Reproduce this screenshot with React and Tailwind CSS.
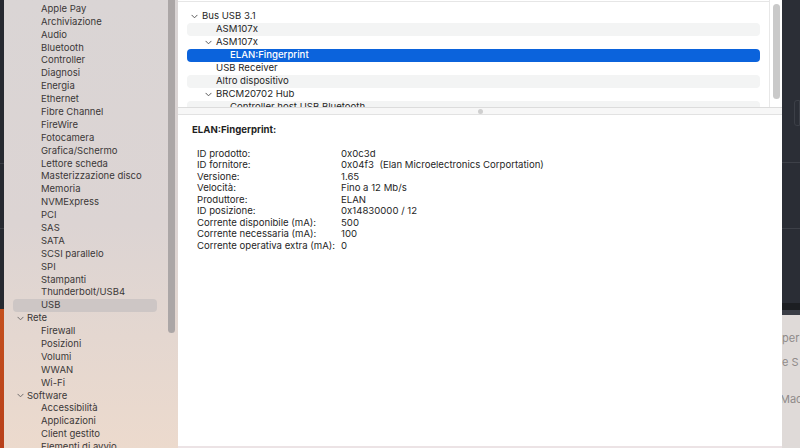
const sidebar = [
  { t: "Apple Pay" },
  { t: "Archiviazione" },
  { t: "Audio" },
  { t: "Bluetooth" },
  { t: "Controller" },
  { t: "Diagnosi" },
  { t: "Energia" },
  { t: "Ethernet" },
  { t: "Fibre Channel" },
  { t: "FireWire" },
  { t: "Fotocamera" },
  { t: "Grafica/Schermo" },
  { t: "Lettore scheda" },
  { t: "Masterizzazione disco" },
  { t: "Memoria" },
  { t: "NVMExpress" },
  { t: "PCI" },
  { t: "SAS" },
  { t: "SATA" },
  { t: "SCSI parallelo" },
  { t: "SPI" },
  { t: "Stampanti" },
  { t: "Thunderbolt/USB4" },
  { t: "USB", active: true },
  { t: "Rete", section: true },
  { t: "Firewall" },
  { t: "Posizioni" },
  { t: "Volumi" },
  { t: "WWAN" },
  { t: "Wi-Fi" },
  { t: "Software", section: true },
  { t: "Accessibilità" },
  { t: "Applicazioni" },
  { t: "Client gestito" },
  { t: "Elementi di avvio" },
];

const tree = [
  { t: "Bus USB 3.1", level: 0, open: true },
  { t: "ASM107x", level: 1 },
  { t: "ASM107x", level: 1, open: true },
  { t: "ELAN:Fingerprint", level: 2, selected: true },
  { t: "USB Receiver", level: 1 },
  { t: "Altro dispositivo", level: 1 },
  { t: "BRCM20702 Hub", level: 1, open: true },
  { t: "Controller host USB Bluetooth", level: 2 },
];

const details = [
  ["ID prodotto:", "0x0c3d"],
  ["ID fornitore:", "0x04f3  (Elan Microelectronics Corportation)"],
  ["Versione:", "1.65"],
  ["Velocità:", "Fino a 12 Mb/s"],
  ["Produttore:", "ELAN"],
  ["ID posizione:", "0x14830000 / 12"],
  ["Corrente disponibile (mA):", "500"],
  ["Corrente necessaria (mA):", "100"],
  ["Corrente operativa extra (mA):", "0"],
];

const font = { fontFamily: "Inter, 'Liberation Sans', sans-serif" };

function Chevron({ className }) {
  return (
    <svg viewBox="0 0 8 5" className={className} fill="none" stroke="currentColor" strokeWidth="1.1" strokeLinecap="round" strokeLinejoin="round">
      <path d="M1 1l3 3 3-3" />
    </svg>
  );
}

export default function App() {
  return (
    <div className="w-[800px] h-[448px] flex overflow-hidden bg-[#2a2d34]" style={font}>
      {/* desktop sliver on the left */}
      <div className="w-[4px] flex flex-col">
        <div className="h-[163px] bg-[#262930]" />
        <div className="h-[1px] bg-[#3a3d44]" />
        <div className="h-[64px] bg-[#262930]" />
        <div className="h-[1px] bg-[#3a3d44]" />
        <div className="h-[80px] bg-[#262930]" />
        <div className="flex-1 bg-gradient-to-b from-[#c4501e] to-[#b8401a]" />
      </div>

      {/* sidebar */}
      <div className="relative w-[174px] bg-gradient-to-b from-[#dad5d5] via-[#dcd4d3] to-[#ecdacd] pt-[2.5px] text-[9.5px] text-[#3b3838] overflow-hidden">
        {sidebar.map((s, i) =>
          s.section ? (
            <div key={i} className="h-[12.9px] flex items-center pl-[13px]">
              <Chevron className="w-[7px] h-[5px] text-[#6d6a6a] mr-[3px]" />
              <span>{s.t}</span>
            </div>
          ) : (
            <div
              key={i}
              className={`h-[12.9px] flex items-center ml-[9px] w-[144px] pl-[28px] whitespace-nowrap rounded-[4px] ${s.active ? "bg-[#cdc6c5]" : ""}`}
            >
              {s.t}
            </div>
          )
        )}
        <div className="absolute right-[3px] top-0 w-[7px] h-[333px] rounded-b-full bg-[#aba6a6]" />
      </div>

      {/* main window content */}
      <div className="w-[604px] flex flex-col bg-white text-[9.6px] text-[#262626]">
        {/* device tree */}
        <div className="h-[108px] flex border-b border-[#dcdcdc]">
          <div className="flex-1 border-t border-[#e6e6e6] mt-[1px] pt-[8px] px-[9px] overflow-hidden">
            {tree.map((r, i) => (
              <div
                key={i}
                className={`h-[13px] flex items-center rounded-[4px] whitespace-nowrap ${
                  r.selected ? "bg-[#0b63dc] text-white font-medium" : i % 2 === 1 ? "bg-[#f3f4f4]" : ""
                }`}
                style={{ paddingLeft: 4 + r.level * 14 }}
              >
                <span className="w-[11px] flex items-center">
                  {r.open && <Chevron className="w-[7px] h-[5px] text-[#555]" />}
                </span>
                <span>{r.t}</span>
              </div>
            ))}
          </div>
          <div className="w-[13px] border-l border-[#e8e8e8] pt-[4px] pl-[3px]">
            <div className="w-[7px] h-[95px] rounded-full bg-[#c9c9c9]" />
          </div>
        </div>

        {/* split handle */}
        <div className="h-[7px] bg-[#f7f7f7] border-b border-[#e2e2e2] flex items-center justify-center">
          <div className="w-[5px] h-[5px] rounded-full bg-[#cfcfcf]" />
        </div>

        {/* details */}
        <div className="flex-1 border-b border-[#ece3e5] pl-[14px] pt-[9px]">
          <div className="h-[12px] flex items-center font-bold text-[#1f1f1f]">ELAN:Fingerprint:</div>
          <div className="pt-[12px] pl-[5px]">
            {details.map(([k, v], i) => (
              <div key={i} className="h-[11.5px] flex items-center whitespace-nowrap">
                <span className="w-[144px]">{k}</span>
                <span className="whitespace-pre">{v}</span>
              </div>
            ))}
          </div>
        </div>
        <div className="h-[1px] bg-[#ece3e5]" />
      </div>

      {/* desktop sliver on the right */}
      <div className="w-[18px] flex flex-col">
        <div className="h-[100px] bg-[#2b2e36]" />
        <div className="h-[27px] bg-[#2b2e36] flex justify-end">
          <div className="w-[6px] h-[26px] rounded-l-[3px] border border-[#3c3f47]" />
        </div>
        <div className="h-[35px] bg-[#2b2e36]" />
        <div className="h-[1px] bg-[#3d4048]" />
        <div className="h-[65px] bg-[#2a2d35]" />
        <div className="h-[1px] bg-[#3d4048]" />
        <div className="h-[74px] bg-[#2a2d35]" />
        <div className="h-[7px] bg-[#1c1e22]" />
        <div className="h-[5px] bg-[#3a3d45]" />
        <div className="flex-1 bg-[#dfdad8] text-[11px] text-[#8f8b8a] overflow-hidden whitespace-nowrap">
          <div className="mt-[16px] h-[14px] leading-[14px]">per</div>
          <div className="mt-[10px] h-[14px] leading-[14px]">e S</div>
          <div className="mt-[23px] h-[14px] leading-[14px] -ml-[2px]">Mac</div>
        </div>
      </div>
    </div>
  );
}
